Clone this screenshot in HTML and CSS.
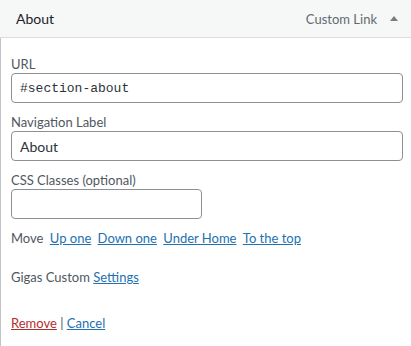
FILE: index.html
```html
<!DOCTYPE html>
<html lang="en">
<head>
  <meta charset="UTF-8" />
  <title>Menu Item</title>
  <link rel="stylesheet" href="styles.css">
</head>
<body>

  <div class="menu-item">
    <div class="item-handle">
      <span class="item-title">About</span>
      <span class="item-controls">
        <span class="item-type">Custom Link</span>
        <svg class="item-toggle" width="10" height="10" viewBox="0 0 10 10">
          <polygon points="1,7 9,7 5,2" fill="#787c82"/>
        </svg>
      </span>
    </div>

    <div class="item-settings">
      <div class="field">
        <label for="url">URL</label>
        <input type="text" id="url" class="code wide" value="#section-about" />
      </div>

      <div class="field">
        <label for="navLabel">Navigation Label</label>
        <input type="text" id="navLabel" class="wide" value="About" />
      </div>

      <div class="field">
        <label for="cssClasses">CSS Classes (optional)</label>
        <input type="text" id="cssClasses" class="narrow" />
      </div>

      <div class="move-row">
        Move
        <a href="#">Up one</a>
        <a href="#">Down one</a>
        <a href="#">Under Home</a>
        <a href="#">To the top</a>
      </div>

      <div class="custom-row">Gigas Custom <a href="#">Settings</a></div>

      <div class="actions">
        <a href="#" class="remove">Remove</a> | <a href="#">Cancel</a>
      </div>
    </div>
  </div>

</body>
</html>
```

FILE: styles.css
```css
:root {
  --link-blue: #2271b1;
  --remove-red: #b32d2e;
  --text-gray: #50575e;
  --border-gray: #c3c4c7;
}

body {
  margin: 0;
  font-family: 'Lato', 'Liberation Sans', sans-serif;
  font-size: 13px;
  color: var(--text-gray);
  background: #fff;
}

a {
  color: var(--link-blue);
}

.menu-item {
  width: 420px;
}

.item-handle {
  display: flex;
  align-items: center;
  justify-content: space-between;
  height: 37px;
  padding: 0 12px 0 16px;
  background: #f6f7f7;
  border-bottom: 1px solid #dcdcde;
  box-sizing: content-box;
}

.item-title {
  font-size: 14px;
  color: #1d2327;
}

.item-controls {
  display: flex;
  align-items: center;
  gap: 12px;
  margin-right: 9px;
}

.item-type {
  color: #646970;
}

.item-settings {
  border-left: 1px solid var(--border-gray);
  padding: 17px 10px 20px;
  line-height: 18px;
}

.field {
  display: flex;
  flex-direction: column;
  margin-bottom: 10px;
}

.field label {
  height: 18px;
}

input {
  height: 30px;
  box-sizing: border-box;
  padding: 0 8px;
  border: 1px solid #8c8f94;
  border-radius: 4px;
  font-family: 'Lato', 'Liberation Sans', sans-serif;
  font-size: 14px;
  color: #2c3338;
  background: #fff;
}

input.wide {
  width: 392px;
}

input.narrow {
  width: 191px;
}

input.code {
  font-family: 'Liberation Mono', monospace;
  font-size: 13px;
}

.move-row a {
  margin-left: 3px;
}

.custom-row {
  margin-top: 21px;
}

.actions {
  margin-top: 28px;
}

.actions .remove {
  color: var(--remove-red);
}
```
